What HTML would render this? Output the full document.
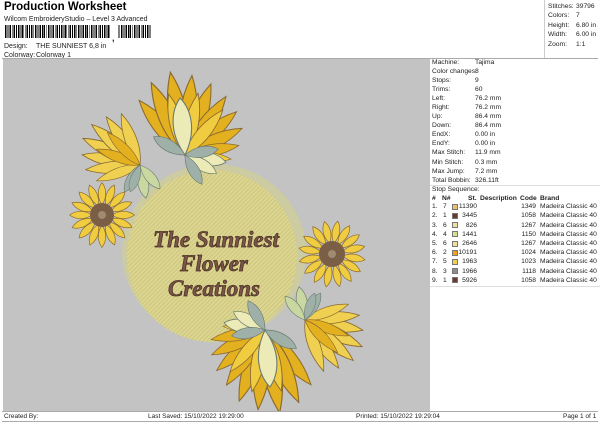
<!DOCTYPE html><html><head><style>
*{margin:0;padding:0;box-sizing:border-box}
body{width:600px;height:424px;background:#fff;font-family:"Liberation Sans",Arial,sans-serif;font-size:6.7px;color:#222;position:relative;overflow:hidden}
.a{position:absolute;white-space:nowrap}
.r div{height:9.1px;line-height:9.1px}
.top div{height:9.5px;line-height:9.5px}
.row{position:absolute;left:0;width:170px;height:9px;line-height:9px}
.row span{position:absolute}
.sw{position:absolute;width:6px;height:6px;top:1.5px;left:20px;border:0.5px solid #777}
.n{width:30px;text-align:right}
</style></head><body>
<div class="a" style="left:4px;top:1px;font-size:11.5px;font-weight:bold;color:#000">Production Worksheet</div>
<div class="a" style="left:4px;top:16px;font-size:7px">Wilcom EmbroideryStudio – Level 3 Advanced</div>
<div class="a" style="left:5px;top:25px;width:146px;height:13px;background:repeating-linear-gradient(90deg,#000 0 1.5px,#fff 1.5px 2.6px,#000 2.6px 3.4px,#fff 3.4px 4.3px)"></div>
<div class="a" style="left:110px;top:25px;width:8px;height:15px;background:#fff"></div>
<div class="a" style="left:112px;top:33px;font-size:9px;font-weight:bold">,</div>
<div class="a" style="left:4px;top:43px;font-size:7px">Design:</div><div class="a" style="left:36px;top:43px;font-size:7px">THE SUNNIEST 6,8 in</div>
<div class="a" style="left:4px;top:52px;font-size:7px">Colorway:</div><div class="a" style="left:36px;top:52px;font-size:7px">Colorway 1</div>
<div class="a" style="left:544px;top:0;width:1px;height:58px;background:#ccc"></div>
<div class="a top" style="left:548px;top:1.5px"><div>Stitches:</div><div>Colors:</div><div>Height:</div><div>Width:</div><div>Zoom:</div></div>
<div class="a top" style="left:576px;top:1.5px"><div>39796</div><div>7</div><div>6.80 in</div><div>6.00 in</div><div>1:1</div></div>
<div class="a" style="left:2px;top:58px;width:596px;height:1px;background:#aaa"></div>
<div class="a" style="left:3px;top:59px;width:427px;height:352px;background:#c3c3c3;overflow:hidden">
<svg width="427" height="352" viewBox="3 59 427 352">
<defs>
<pattern id="h" width="3" height="3" patternUnits="userSpaceOnUse" patternTransform="rotate(45)"><rect width="3" height="3" fill="#dcd690"/><rect width="1" height="3" fill="#cbc57f"/></pattern>
<path id="p" d="M0 0 C-7 -14 -5 -30 0 -42 C5 -30 7 -14 0 0Z" stroke="#8a6a30" stroke-width=".6"/>
<path id="q" d="M0 0 C-4 -6 -3 -12 0 -16 C3 -12 4 -6 0 0Z" stroke="#8a6a30" stroke-width=".5"/>
<path id="l" d="M0 0 C-6 -10 -5 -20 0 -26 C5 -20 6 -10 0 0Z" stroke="#6a7a70" stroke-width=".5"/>
</defs>
<ellipse cx="214" cy="252" rx="92" ry="88" fill="#d2d08a" opacity=".6"/>
<ellipse cx="212" cy="256" rx="85" ry="86" fill="url(#h)"/>
<g transform="translate(185 155)">
<g fill="#e3b020"><use href="#p" transform="rotate(-40) scale(1.7)"/><use href="#p" transform="rotate(-25) scale(1.9)"/><use href="#p" transform="rotate(-10) scale(2)"/><use href="#p" transform="rotate(5) scale(1.9)"/><use href="#p" transform="rotate(20) scale(1.8)"/><use href="#p" transform="rotate(35) scale(1.7)"/><use href="#p" transform="rotate(50) scale(1.6)"/><use href="#p" transform="rotate(65) scale(1.5)"/><use href="#p" transform="rotate(80) scale(1.3)"/></g>
<g fill="#f0cc40"><use href="#p" transform="rotate(-15) scale(1.5)"/><use href="#p" transform="rotate(12) scale(1.5)"/><use href="#p" transform="rotate(40) scale(1.4)"/><use href="#p" transform="rotate(95) scale(1.1)"/></g>
<g fill="#ecebb8"><use href="#l" transform="rotate(100) scale(1.6)"/><use href="#l" transform="rotate(120) scale(1.4)"/><use href="#l" transform="rotate(-5) scale(2.2)"/></g>
<g fill="#9eb0a8"><use href="#l" transform="rotate(-60) scale(1.4)"/><use href="#l" transform="rotate(150) scale(1.3)"/><use href="#l" transform="rotate(80) scale(1.3)"/></g>
</g>
<g transform="translate(140 165)">
<g fill="#f0d050"><use href="#p" transform="rotate(-80) scale(1.4)"/><use href="#p" transform="rotate(-65) scale(1.5)"/><use href="#p" transform="rotate(-50) scale(1.5)"/><use href="#p" transform="rotate(-35) scale(1.4)"/><use href="#p" transform="rotate(-95) scale(1.3)"/><use href="#p" transform="rotate(-110) scale(1.1)"/><use href="#p" transform="rotate(-20) scale(1.3)"/></g>
<g fill="#e3b020"><use href="#p" transform="rotate(-70) scale(1.1)"/><use href="#p" transform="rotate(-45) scale(1.1)"/></g>
<g fill="#c8d8a0"><use href="#l" transform="rotate(170) scale(1.3)"/><use href="#l" transform="rotate(140) scale(1.2)"/></g>
<g fill="#9eb0a8"><use href="#l" transform="rotate(-150) scale(1.2)"/><use href="#l" transform="rotate(200) scale(1.1)"/></g>
</g>
<g transform="translate(265 330)">
<g fill="#e3b020"><use href="#p" transform="rotate(140) scale(1.7)"/><use href="#p" transform="rotate(155) scale(1.9)"/><use href="#p" transform="rotate(170) scale(2)"/><use href="#p" transform="rotate(185) scale(1.9)"/><use href="#p" transform="rotate(200) scale(1.8)"/><use href="#p" transform="rotate(215) scale(1.6)"/><use href="#p" transform="rotate(230) scale(1.5)"/><use href="#p" transform="rotate(245) scale(1.4)"/><use href="#p" transform="rotate(260) scale(1.3)"/></g>
<g fill="#f0cc40"><use href="#p" transform="rotate(165) scale(1.5)"/><use href="#p" transform="rotate(192) scale(1.5)"/><use href="#p" transform="rotate(220) scale(1.3)"/><use href="#p" transform="rotate(275) scale(1)"/></g>
<g fill="#ecebb8"><use href="#l" transform="rotate(280) scale(1.6)"/><use href="#l" transform="rotate(300) scale(1.4)"/><use href="#l" transform="rotate(175) scale(2.2)"/></g>
<g fill="#9eb0a8"><use href="#l" transform="rotate(120) scale(1.4)"/><use href="#l" transform="rotate(330) scale(1.3)"/><use href="#l" transform="rotate(260) scale(1.3)"/></g>
</g>
<g transform="translate(305 320)">
<g fill="#f0d050"><use href="#p" transform="rotate(100) scale(1.4)"/><use href="#p" transform="rotate(115) scale(1.5)"/><use href="#p" transform="rotate(130) scale(1.5)"/><use href="#p" transform="rotate(145) scale(1.4)"/><use href="#p" transform="rotate(85) scale(1.3)"/><use href="#p" transform="rotate(70) scale(1.1)"/><use href="#p" transform="rotate(160) scale(1.3)"/></g>
<g fill="#e3b020"><use href="#p" transform="rotate(110) scale(1.1)"/><use href="#p" transform="rotate(135) scale(1.1)"/></g>
<g fill="#c8d8a0"><use href="#l" transform="rotate(-10) scale(1.3)"/><use href="#l" transform="rotate(-40) scale(1.2)"/></g>
<g fill="#9eb0a8"><use href="#l" transform="rotate(30) scale(1.2)"/><use href="#l" transform="rotate(20) scale(1.1)"/></g>
</g>
<g transform="translate(102 215)" fill="#f0cc40">
<use href="#q" transform="rotate(0) translate(0 -10) scale(1.4)"/><use href="#q" transform="rotate(22) translate(0 -10) scale(1.4)"/><use href="#q" transform="rotate(45) translate(0 -10) scale(1.4)"/><use href="#q" transform="rotate(67) translate(0 -10) scale(1.4)"/><use href="#q" transform="rotate(90) translate(0 -10) scale(1.4)"/><use href="#q" transform="rotate(112) translate(0 -10) scale(1.4)"/><use href="#q" transform="rotate(135) translate(0 -10) scale(1.4)"/><use href="#q" transform="rotate(157) translate(0 -10) scale(1.4)"/><use href="#q" transform="rotate(180) translate(0 -10) scale(1.4)"/><use href="#q" transform="rotate(202) translate(0 -10) scale(1.4)"/><use href="#q" transform="rotate(225) translate(0 -10) scale(1.4)"/><use href="#q" transform="rotate(247) translate(0 -10) scale(1.4)"/><use href="#q" transform="rotate(270) translate(0 -10) scale(1.4)"/><use href="#q" transform="rotate(292) translate(0 -10) scale(1.4)"/><use href="#q" transform="rotate(315) translate(0 -10) scale(1.4)"/><use href="#q" transform="rotate(337) translate(0 -10) scale(1.4)"/>
<circle r="12" fill="#7a5e46"/><circle r="4" fill="#a08a70"/></g>
<g transform="translate(332 254)" fill="#f0cc40">
<use href="#q" transform="rotate(10) translate(0 -11) scale(1.4)"/><use href="#q" transform="rotate(32) translate(0 -11) scale(1.4)"/><use href="#q" transform="rotate(55) translate(0 -11) scale(1.4)"/><use href="#q" transform="rotate(77) translate(0 -11) scale(1.4)"/><use href="#q" transform="rotate(100) translate(0 -11) scale(1.4)"/><use href="#q" transform="rotate(122) translate(0 -11) scale(1.4)"/><use href="#q" transform="rotate(145) translate(0 -11) scale(1.4)"/><use href="#q" transform="rotate(167) translate(0 -11) scale(1.4)"/><use href="#q" transform="rotate(190) translate(0 -11) scale(1.4)"/><use href="#q" transform="rotate(212) translate(0 -11) scale(1.4)"/><use href="#q" transform="rotate(235) translate(0 -11) scale(1.4)"/><use href="#q" transform="rotate(257) translate(0 -11) scale(1.4)"/><use href="#q" transform="rotate(280) translate(0 -11) scale(1.4)"/><use href="#q" transform="rotate(302) translate(0 -11) scale(1.4)"/><use href="#q" transform="rotate(325) translate(0 -11) scale(1.4)"/><use href="#q" transform="rotate(347) translate(0 -11) scale(1.4)"/>
<circle r="13" fill="#7a5e46"/><circle r="4" fill="#a08a70"/></g>
<g font-family="Liberation Serif,serif" font-style="italic" font-weight="bold" fill="#7a5446" stroke="#4a3026" stroke-width=".7" text-anchor="middle">
<text x="216" y="247" font-size="23">The Sunniest</text>
<text x="214" y="271" font-size="23">Flower</text>
<text x="214" y="296" font-size="23">Creations</text>
</g>
</svg></div>
<div class="a r" style="left:432px;top:57.5px"><div>Machine:</div><div>Color changes:</div><div>Stops:</div><div>Trims:</div><div>Left:</div><div>Right:</div><div>Up:</div><div>Down:</div><div>EndX:</div><div>EndY:</div><div>Max Stitch:</div><div>Min Stitch:</div><div>Max Jump:</div><div>Total Bobbin:</div><div>Stop Sequence:</div></div>
<div class="a r" style="left:475px;top:57.5px"><div>Tajima</div><div>8</div><div>9</div><div>60</div><div>76.2 mm</div><div>76.2 mm</div><div>86.4 mm</div><div>86.4 mm</div><div>0.00 in</div><div>0.00 in</div><div>11.9 mm</div><div>0.3 mm</div><div>7.2 mm</div><div>326.11ft</div><div></div></div>
<div class="a" style="left:430px;top:185px;width:170px;height:1px;background:#ddd"></div>
<div class="a" style="left:432px;top:194px;width:168px;height:90px">
<div class="row" style="top:0;font-weight:bold;text-decoration:underline"><span style="left:0">#</span><span style="left:10px">N#</span><span style="left:36px">St.</span><span style="left:48px">Description</span><span style="left:88px">Code</span><span style="left:108px">Brand</span></div>
<div class="row" style="top:8.2px"><span style="left:0">1.</span><span style="left:11px">7</span><i class="sw" style="background:#e8c070"></i><span class="n" style="left:15px">11390</span><span class="n" style="left:74px">1349</span><span style="left:108px">Madeira Classic 40</span></div>
<div class="row" style="top:17.4px"><span style="left:0">2.</span><span style="left:11px">1</span><i class="sw" style="background:#6a3a2e"></i><span class="n" style="left:15px">3445</span><span class="n" style="left:74px">1058</span><span style="left:108px">Madeira Classic 40</span></div>
<div class="row" style="top:26.6px"><span style="left:0">3.</span><span style="left:11px">6</span><i class="sw" style="background:#f0e0a0"></i><span class="n" style="left:15px">826</span><span class="n" style="left:74px">1267</span><span style="left:108px">Madeira Classic 40</span></div>
<div class="row" style="top:35.8px"><span style="left:0">4.</span><span style="left:11px">4</span><i class="sw" style="background:#d8e090"></i><span class="n" style="left:15px">1441</span><span class="n" style="left:74px">1150</span><span style="left:108px">Madeira Classic 40</span></div>
<div class="row" style="top:45px"><span style="left:0">5.</span><span style="left:11px">6</span><i class="sw" style="background:#f0e0a0"></i><span class="n" style="left:15px">2646</span><span class="n" style="left:74px">1267</span><span style="left:108px">Madeira Classic 40</span></div>
<div class="row" style="top:54.2px"><span style="left:0">6.</span><span style="left:11px">2</span><i class="sw" style="background:#f0a020"></i><span class="n" style="left:15px">10191</span><span class="n" style="left:74px">1024</span><span style="left:108px">Madeira Classic 40</span></div>
<div class="row" style="top:63.4px"><span style="left:0">7.</span><span style="left:11px">5</span><i class="sw" style="background:#f0d050"></i><span class="n" style="left:15px">1963</span><span class="n" style="left:74px">1023</span><span style="left:108px">Madeira Classic 40</span></div>
<div class="row" style="top:72.6px"><span style="left:0">8.</span><span style="left:11px">3</span><i class="sw" style="background:#8a9090"></i><span class="n" style="left:15px">1966</span><span class="n" style="left:74px">1118</span><span style="left:108px">Madeira Classic 40</span></div>
<div class="row" style="top:81.8px"><span style="left:0">9.</span><span style="left:11px">1</span><i class="sw" style="background:#6a3a2e"></i><span class="n" style="left:15px">5926</span><span class="n" style="left:74px">1058</span><span style="left:108px">Madeira Classic 40</span></div>
</div>
<div class="a" style="left:430px;top:286px;width:170px;height:1px;background:#ddd"></div>
<div class="a" style="left:2px;top:411px;width:596px;height:1px;background:#aaa"></div>
<div class="a" style="left:4px;top:413px;font-size:6.5px">Created By:</div>
<div class="a" style="left:148px;top:413px;font-size:6.5px">Last Saved: 15/10/2022 19:29:00</div>
<div class="a" style="left:356px;top:413px;font-size:6.5px">Printed: 15/10/2022 19:29:04</div>
<div class="a" style="left:563px;top:413px;font-size:6.5px">Page 1 of 1</div>
<div class="a" style="left:2px;top:421px;width:596px;height:1px;background:#aaa"></div>
</body></html>
